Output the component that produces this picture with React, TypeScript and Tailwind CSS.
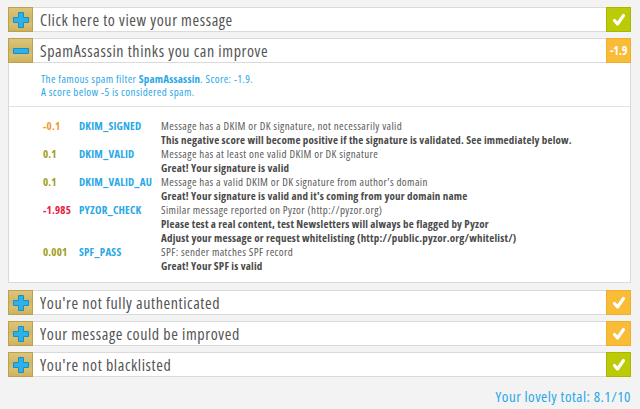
import React from "react";

const Plus = () => (
  <svg width="18" height="18" viewBox="0 0 18 18">
    <path d="M6.5 1.5h5v5h5v5h-5v5h-5v-5h-5v-5h5z" fill="#2cb2ea" stroke="#1b8fc2" strokeWidth="1" strokeLinejoin="round" />
  </svg>
);

const Minus = () => (
  <svg width="18" height="18" viewBox="0 0 18 18">
    <path d="M1.5 6.5h15v5h-15z" fill="#2cb2ea" stroke="#1b8fc2" strokeWidth="1" strokeLinejoin="round" />
  </svg>
);

const Check = () => (
  <svg width="16" height="16" viewBox="0 0 16 16">
    <path d="M3.5 8.5l3 3.5 6-8.5" fill="none" stroke="#fff" strokeWidth="3.2" strokeLinecap="round" strokeLinejoin="round" />
  </svg>
);

const Icon = ({ minus }: { minus?: boolean }) => (
  <div className="w-[25px] h-[25px] -my-px -ml-px shrink-0 flex items-center justify-center border border-[#bea04c] bg-[linear-gradient(180deg,#dcc57c_0%,#cfb664_45%,#d8c073_70%,#ccb15e_100%)]">
    {minus ? <Minus /> : <Plus />}
  </div>
);

const Badge = ({ color, children }: { color: "green" | "orange"; children: React.ReactNode }) => (
  <div
    className={
      "w-[25px] h-[25px] -my-px -mr-px shrink-0 flex items-center justify-center border " +
      (color === "green" ? "bg-[#bccb05] border-[#a9b604]" : "bg-[#f8bc36] border-[#eeaf2a]")
    }
  >
    {children}
  </div>
);

const Row = ({ title, minus, badge }: { title: string; minus?: boolean; badge: React.ReactNode }) => (
  <div className="flex items-center h-[25px] bg-white border border-[#dadada]">
    <Icon minus={minus} />
    <div className="flex-1 pl-[7px] pt-[1px] text-[16px] text-[#545454] leading-none tracking-[0.6px]">{title}</div>
    {badge}
  </div>
);

const rules = [
  {
    score: "-0.1",
    color: "text-[#f09a2b]",
    name: "DKIM_SIGNED",
    lines: ["Message has a DKIM or DK signature, not necessarily valid"],
    bold: ["This negative score will become positive if the signature is validated. See immediately below."],
  },
  {
    score: "0.1",
    color: "text-[#9e9e16]",
    name: "DKIM_VALID",
    lines: ["Message has at least one valid DKIM or DK signature"],
    bold: ["Great! Your signature is valid"],
  },
  {
    score: "0.1",
    color: "text-[#9e9e16]",
    name: "DKIM_VALID_AU",
    lines: ["Message has a valid DKIM or DK signature from author's domain"],
    bold: ["Great! Your signature is valid and it's coming from your domain name"],
  },
  {
    score: "-1.985",
    color: "text-[#e8203c]",
    name: "PYZOR_CHECK",
    lines: ["Similar message reported on Pyzor (http://pyzor.org)"],
    bold: [
      "Please test a real content, test Newsletters will always be flagged by Pyzor",
      "Adjust your message or request whitelisting (http://public.pyzor.org/whitelist/)",
    ],
  },
  {
    score: "0.001",
    color: "text-[#9e9e16]",
    name: "SPF_PASS",
    lines: ["SPF: sender matches SPF record"],
    bold: ["Great! Your SPF is valid"],
  },
];

export default function App() {
  return (
    <div className="w-[640px] h-[409px] bg-[#f3f3f3] pt-[7px] px-[8px] overflow-hidden font-stretch-semi-condensed [font-stretch:87.5%] font-['Open_Sans','Noto_Sans',sans-serif]">
      <div className="w-[623px] flex flex-col">
        <Row title="Click here to view your message" badge={<Badge color="green"><Check /></Badge>} />
        <div className="mt-[6px]">
          <Row
            title="SpamAssassin thinks you can improve"
            minus
            badge={
              <Badge color="orange">
                <span className="text-white font-bold text-[12px] tracking-[-0.2px]">-1.9</span>
              </Badge>
            }
          />
          <div className="bg-white border border-t-0 border-[#dadada] h-[220px]">
            <div className="pl-[32px] pt-[9px] pb-[8px] text-[11px] leading-[13px] text-[#2aa8e6] tracking-[0.4px]">
              <div>
                The famous spam filter <span className="font-bold tracking-[0.2px]">SpamAssassin</span>. Score: -1.9.
              </div>
              <div>A score below -5 is considered spam.</div>
            </div>
            <div className="border-t border-[#e2e2e2]" />
            <div className="pt-[12px] pl-[34px] flex flex-col text-[11px] leading-[14px] tracking-[0.4px]">
              {rules.map((r) => (
                <div key={r.name} className="grid grid-cols-[36px_82px_1fr]">
                  <div className={"font-bold tracking-[0.2px] " + r.color}>{r.score}</div>
                  <div className="font-bold text-[#2aa8e6] tracking-[0.2px]">{r.name}</div>
                  <div>
                    {r.lines.map((l) => (
                      <div key={l} className="text-[#5a5a5a]">{l}</div>
                    ))}
                    {r.bold.map((l) => (
                      <div key={l} className="font-bold text-[#4a4a4a] tracking-[0.2px]">{l}</div>
                    ))}
                  </div>
                </div>
              ))}
            </div>
          </div>
        </div>
        <div className="mt-[7px] flex flex-col gap-[6px]">
          <Row title="You're not fully authenticated" badge={<Badge color="orange"><Check /></Badge>} />
          <Row title="Your message could be improved" badge={<Badge color="orange"><Check /></Badge>} />
          <Row title="You're not blacklisted" badge={<Badge color="green"><Check /></Badge>} />
        </div>
        <div className="mt-[8px] text-right text-[15px] text-[#2aa8e6] tracking-[0.5px]">Your lovely total: 8.1/10</div>
      </div>
    </div>
  );
}
